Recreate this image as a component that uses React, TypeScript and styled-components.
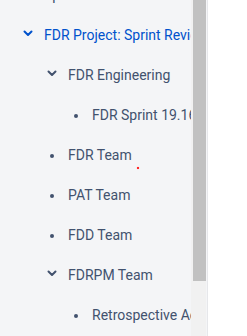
import React from "react";
import styled, { createGlobalStyle } from "styled-components";

const Global = createGlobalStyle`
  html, body { margin: 0; padding: 0; background: #ffffff; }
  body { font-family: Roboto, "Noto Sans", "Liberation Sans", sans-serif; }
  #root { height: 336px; overflow: hidden; }
`;

const Page = styled.div`
  display: flex;
  height: 336px;
  width: 247px;
  background: #ffffff;
  position: relative;
`;

const Sidebar = styled.div`
  display: flex;
  width: 207px;
  height: 336px;
  background: #f4f5f7;
  border-right: 1px solid #e6e7ea;
`;

const Viewport = styled.div`
  width: 191px;
  height: 336px;
  overflow: hidden;
`;

const List = styled.ul`
  list-style: none;
  margin: -25px 0 0 0;
  padding: 0;
`;

const Row = styled.li<{ $level: number }>`
  display: flex;
  align-items: center;
  height: 40px;
  padding-left: ${(p) => 20 + (p.$level - 1) * 24}px;
  white-space: nowrap;
`;

const Marker = styled.span`
  display: flex;
  align-items: center;
  justify-content: center;
  width: 16px;
  height: 16px;
  margin-right: 8px;
  flex: none;
`;

const Bullet = styled.span`
  width: 4px;
  height: 4px;
  border-radius: 50%;
  background: #42526e;
  margin-top: 1px;
`;

const Label = styled.span<{ $active?: boolean }>`
  font-size: 14px;
  line-height: 20px;
  color: ${(p) => (p.$active ? "#0052cc" : "#42526e")};
`;

const Track = styled.div`
  width: 15px;
  height: 336px;
  background: #f1f1f1;
  display: flex;
  flex-direction: column;
`;

const Thumb = styled.div`
  margin-left: 2px;
  width: 13px;
  height: 281px;
  background: #c1c1c1;
`;

const Speck = styled.span`
  position: absolute;
  left: 137px;
  top: 167px;
  width: 2px;
  height: 2px;
  background: #ff2a2a;
  box-shadow: 0 0 1px #ff8080;
`;

const Chevron = ({ color }: { color: string }) => (
  <svg width="10" height="7" viewBox="0 0 10 7" style={{ marginTop: -3 }}>
    <polyline
      points="1.5,1.5 5,5 8.5,1.5"
      fill="none"
      stroke={color}
      strokeWidth="2"
      strokeLinecap="round"
      strokeLinejoin="round"
    />
  </svg>
);

type Item = { label: string; level: number; kind: "chevron" | "bullet"; active?: boolean };

const items: Item[] = [
  { label: "Sprint Retro", level: 1, kind: "bullet" },
  { label: "FDR Project: Sprint Reviews", level: 1, kind: "chevron", active: true },
  { label: "FDR Engineering", level: 2, kind: "chevron" },
  { label: "FDR Sprint 19.16", level: 3, kind: "bullet" },
  { label: "FDR Team", level: 2, kind: "bullet" },
  { label: "PAT Team", level: 2, kind: "bullet" },
  { label: "FDD Team", level: 2, kind: "bullet" },
  { label: "FDRPM Team", level: 2, kind: "chevron" },
  { label: "Retrospective Actions", level: 3, kind: "bullet" },
];

export default function App() {
  return (
    <Page>
      <Global />
      <Sidebar>
        <Viewport>
          <List>
            {items.map((it, i) => (
              <Row key={i} $level={it.level}>
                <Marker>
                  {it.kind === "chevron" ? (
                    <Chevron color={it.active ? "#0052cc" : "#42526e"} />
                  ) : (
                    <Bullet />
                  )}
                </Marker>
                <Label $active={it.active}>{it.label}</Label>
              </Row>
            ))}
          </List>
        </Viewport>
        <Track>
          <Thumb />
        </Track>
      </Sidebar>
      <Speck />
    </Page>
  );
}
